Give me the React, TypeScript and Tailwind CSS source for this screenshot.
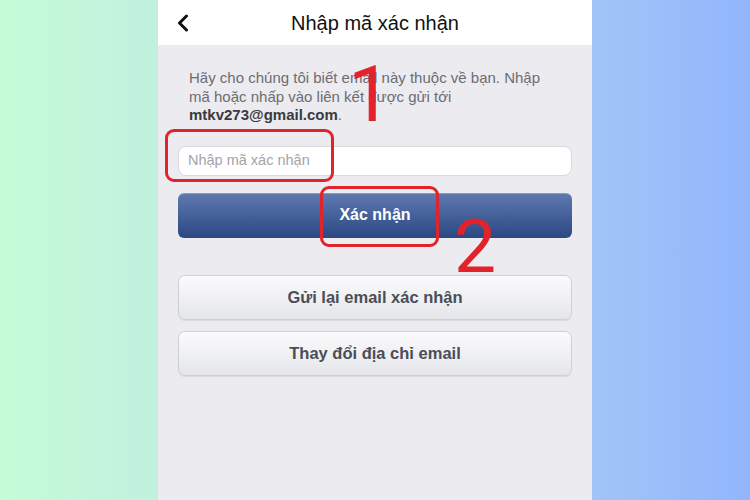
/*
  VerifyEmailShot — màn hình "Nhập mã xác nhận" với chú thích đỏ
*/

const SANS = "font-['Liberation_Sans',Arial,sans-serif]";

function GrayButton({ label }: { label: string }) {
  return (
    <button
      className={`h-[45px] w-full rounded-[7px] border border-[#cfd0d5] bg-gradient-to-b from-[#fbfbfc] to-[#e5e6ea] text-[16.5px] font-bold text-[#4a4e57] shadow-[0_1px_1px_rgba(0,0,0,0.08)] ${SANS}`}
    >
      {label}
    </button>
  );
}

export default function App() {
  return (
    <div className="flex h-[500px] w-[750px] overflow-hidden">
      {/* left backdrop */}
      <div className="h-full w-[158px] bg-gradient-to-r from-[#c6fcd8] to-[#c1f0de]" />

      {/* phone screen */}
      <div className="relative flex h-full w-[434px] flex-col bg-[#ebebf0]">
        {/* Header */}
        <div className="flex h-[45px] items-center bg-white px-[19px]">
          <svg width="12" height="18" viewBox="0 0 12 18" className="shrink-0">
            <polyline points="9.5,2 2.5,9 9.5,16" fill="none" stroke="#111" strokeWidth="3" strokeLinecap="round" strokeLinejoin="round" />
          </svg>
          <h1 className={`flex-1 pr-[12px] text-center text-[20px] text-[#111] ${SANS}`}>Nhập mã xác nhận</h1>
        </div>

        {/* Body */}
        <div className="flex flex-col px-[20px] pt-[24px]">
          <p className={`px-[11px] text-[15px] leading-[18.5px] text-[#6d6d72] ${SANS}`}>
            Hãy cho chúng tôi biết email này thuộc về bạn. Nhập
            <br />
            mã hoặc nhấp vào liên kết được gửi tới
            <br />
            <span className="font-bold text-[#3a3a3e]">mtkv273@gmail.com</span>.
          </p>

          <div className="mt-[21px] flex h-[30px] items-center rounded-[8px] border border-[#d9d9de] bg-white px-[9px]">
            <span className={`text-[14.5px] text-[#a3a3a8] ${SANS}`}>Nhập mã xác nhận</span>
          </div>

          <button
            className={`mt-[17px] h-[45px] w-full rounded-[6px] bg-gradient-to-b from-[#5f7aaf] to-[#2c4884] text-[16px] font-bold text-white shadow-[inset_0_1px_0_rgba(255,255,255,0.25)] ${SANS}`}
          >
            Xác nhận
          </button>

          <div className="mt-[37px] flex flex-col gap-[11px]">
            <GrayButton label="Gửi lại email xác nhận" />
            <GrayButton label="Thay đổi địa chỉ email" />
          </div>
        </div>

        {/* red annotations */}
        <div className="absolute left-[7px] top-[129px] h-[53px] w-[169px] rounded-[9px] border-[3px] border-[#e1242b]" />
        <div className="absolute left-[162px] top-[186px] h-[61px] w-[119px] rounded-[9px] border-[3px] border-[#e1242b]" />
        <span className="absolute left-[190px] top-[56px] font-['Roboto',sans-serif] text-[78px] font-normal leading-none text-[#e3232c]">1</span>
        <span className="absolute left-[296px] top-[209px] font-['Roboto',sans-serif] text-[75px] font-normal leading-none text-[#e3232c]">2</span>
      </div>

      {/* right backdrop */}
      <div className="h-full flex-1 bg-gradient-to-r from-[#a1c5f6] to-[#92b6fc]" />
    </div>
  );
}
